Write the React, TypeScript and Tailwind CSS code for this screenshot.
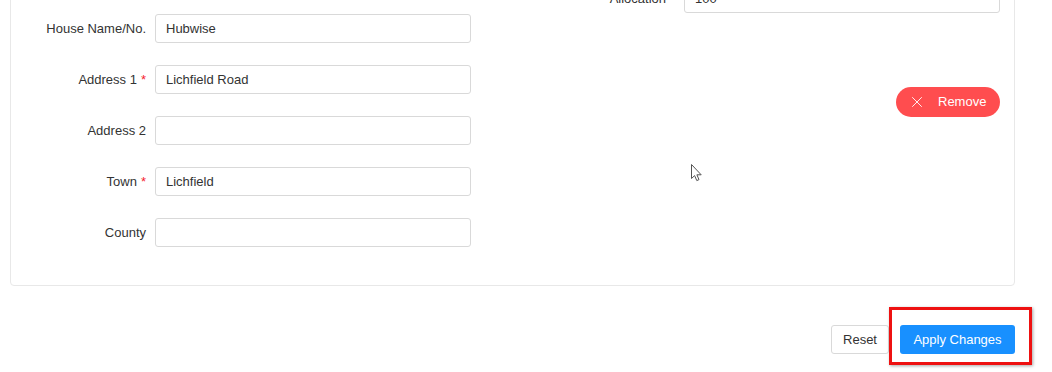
import { X } from "lucide-react";

const font = { fontFamily: '"Liberation Sans", Arial, sans-serif' };

type Row = { label: string; value: string; required?: boolean };

const rows: Row[] = [
  { label: "House Name/No.", value: "Hubwise" },
  { label: "Address 1", value: "Lichfield Road", required: true },
  { label: "Address 2", value: "" },
  { label: "Town", value: "Lichfield", required: true },
  { label: "County", value: "" },
];

const FieldInput = ({ value }: { value: string }) => (
  <div className="h-[29px] w-[316px] border border-[#d9d9d9] rounded-[3px] bg-white px-[10px] flex items-center text-[13px] text-[#333]">
    {value}
  </div>
);

const Cursor = () => (
  <svg width="14" height="20" viewBox="0 0 14 20" className="absolute left-[690px] top-[163px]">
    <path
      d="M1.5 1.5 L1.5 15.5 L4.6 12.6 L6.8 17.6 L9 16.6 L6.9 11.8 L11.2 11.8 Z"
      fill="white"
      stroke="#555"
      strokeWidth="1"
      strokeLinejoin="round"
    />
  </svg>
);

export default function App() {
  return (
    <div className="relative w-[1052px] h-[372px] overflow-hidden bg-white" style={font}>
      <div className="pl-[10px] w-[1015px]">
        <div className="-mt-[40px] border border-[#e8e8e8] rounded-[4px] flex justify-between pr-[14px] pb-[38px] pt-[23px]">
          <div className="flex flex-col gap-[22px] pt-[30px]">
            {rows.map((r) => (
              <div key={r.label} className="flex items-center">
                <div className="w-[136px] pr-[1px] text-right text-[13px] text-[#333]">
                  {r.label}
                  {r.required && <span className="text-[#f5222d] ml-[4px]">*</span>}
                </div>
                <div className="ml-[8px]">
                  <FieldInput value={r.value} />
                </div>
              </div>
            ))}
          </div>

          <div className="flex flex-col items-end">
            <div className="flex items-center">
              <div className="text-[13px] text-[#333] mr-[18px]">Allocation</div>
              <FieldInput value="100" />
            </div>
            <button className="mt-[74px] h-[30px] w-[104px] rounded-full bg-[#ff4d4f] text-white text-[13px] flex items-center pl-[12px]">
              <X size={18} strokeWidth={1.2} />
              <span className="ml-[12px]">Remove</span>
            </button>
          </div>
        </div>

        <div className="mt-[39px] flex justify-end items-center gap-[11px]">
          <button className="h-[29px] w-[58px] border border-[#d9d9d9] rounded-[3px] bg-white text-[13px] text-[#333]">
            Reset
          </button>
          <div className="relative">
            <button className="h-[29px] w-[115px] rounded-[3px] bg-[#1890ff] text-white text-[13px]">
              Apply Changes
            </button>
            <div className="absolute -left-[11px] -top-[18px] -right-[17px] -bottom-[11px] border-[3px] border-[#e11] shadow-[1px_1px_3px_rgba(0,0,0,0.35)]" />
          </div>
        </div>
      </div>
      <Cursor />
    </div>
  );
}
